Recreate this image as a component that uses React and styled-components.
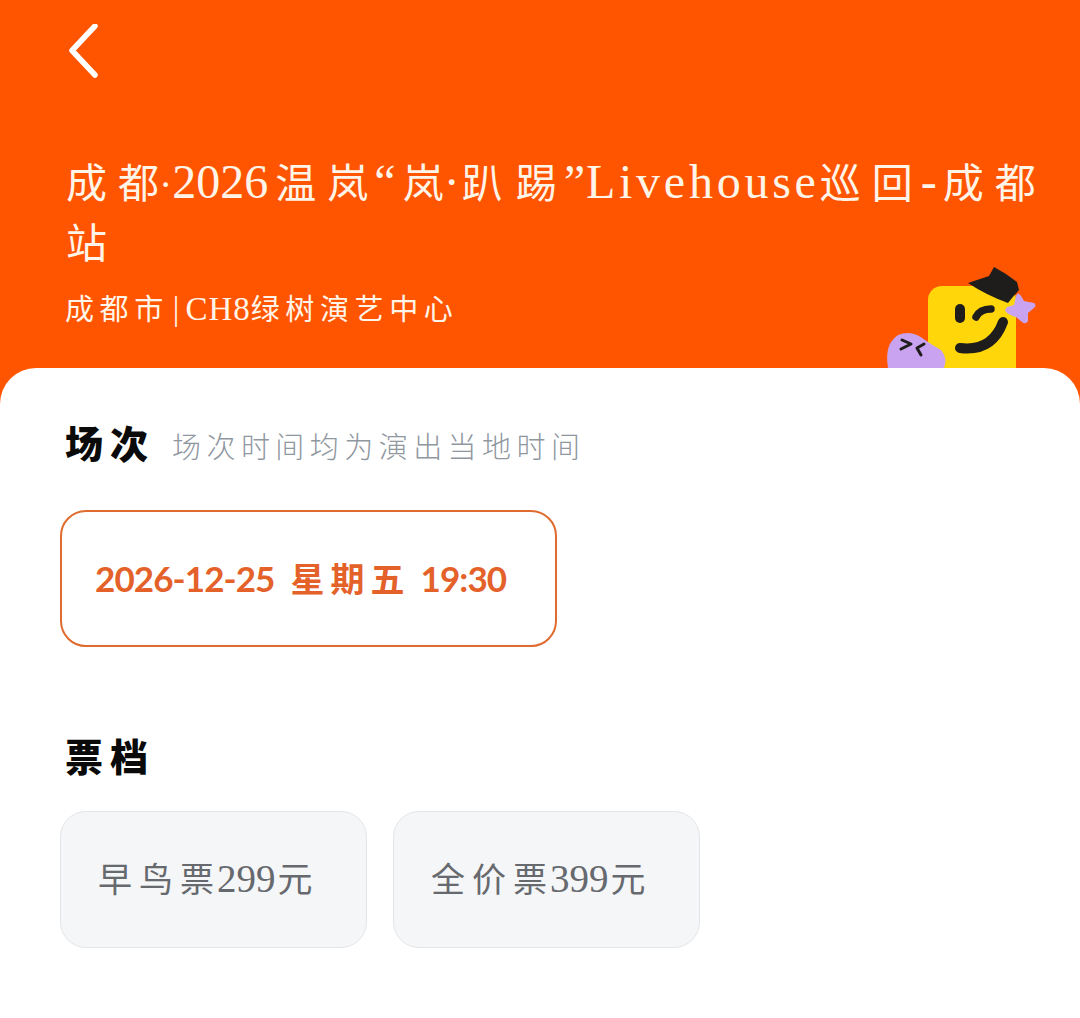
import React from 'react';
import styled, { createGlobalStyle } from 'styled-components';

const Global = createGlobalStyle`
  html, body {
    margin: 0;
    background: #fff;
  }
  * {
    box-sizing: border-box;
  }
`;

const SERIF = `"Liberation Serif", "Noto Sans CJK SC", serif`;
const CJK = `"Noto Sans CJK SC", sans-serif`;

const Page = styled.div`
  display: flex;
  flex-direction: column;
  width: 1080px;
  height: 1018px;
  overflow: hidden;
  background: #ff5500;
`;

const Header = styled.header`
  position: relative;
  height: 368px;
  flex: none;
  padding: 24px 0 0 66px;
  color: #fff4e8;
`;

const BackButton = styled.button`
  display: block;
  width: 36px;
  height: 54px;
  padding: 0;
  border: 0;
  background: none;
  color: #fff;
  svg {
    display: block;
  }
`;

const Title = styled.h1`
  margin: 75px 0 0;
  font-family: ${SERIF};
  font-size: 48px;
  font-weight: 400;
  line-height: 57px;
  white-space: nowrap;
`;

const HanRun = styled.span`
  font-family: ${CJK};
  font-size: ${(p) => p.$size}px;
  line-height: 1;
  letter-spacing: ${(p) => p.$gap}px;
`;

const HanTail = styled.span`
  letter-spacing: ${(p) => p.$end}px;
`;

// han text is set wider than the latin, but the last glyph should not carry that gap along
const Han = ({ children, size = 41, gap = 11, end = 0 }) => (
  <HanRun $size={size} $gap={gap}>
    {children.slice(0, -1)}
    <HanTail $end={end}>{children.slice(-1)}</HanTail>
  </HanRun>
);

const Run = styled.span`
  font-size: ${(p) => (p.$size ? `${p.$size}px` : 'inherit')};
  letter-spacing: ${(p) => p.$gap || 0}px;
  margin-left: ${(p) => p.$before || 0}px;
  margin-right: ${(p) => p.$after || 0}px;
`;

const Venue = styled.p`
  margin: 21px 0 0 -1px;
  font-family: ${SERIF};
  font-size: 33px;
  line-height: 36px;
  white-space: nowrap;
`;

const Mascot = styled.svg`
  position: absolute;
  right: 0;
  bottom: 0;
  display: block;
`;

const Sheet = styled.main`
  flex: 1;
  padding: 56px 60px 0;
  background: #fff;
  border-radius: 36px 36px 0 0;
`;

const SectionHead = styled.div`
  display: flex;
  align-items: center;
  gap: 17px;
  height: 42px;
  padding-left: 5px;
`;

const SectionTitle = styled.h2`
  margin: 0;
  padding-bottom: 6px;
  font-family: ${CJK};
  font-size: 38px;
  font-weight: 900;
  letter-spacing: 7px;
  line-height: 42px;
  color: #0a0a0a;
`;

const SectionNote = styled.span`
  font-family: ${CJK};
  font-size: 29px;
  font-weight: 300;
  letter-spacing: 5.45px;
  line-height: 42px;
  color: #8f979f;
`;

const SessionCard = styled.button`
  display: flex;
  align-items: center;
  width: 497px;
  height: 137px;
  margin-top: 44px;
  padding: 0 0 2px 33px;
  background: #fff;
  border: 2.5px solid #df6c2e;
  border-radius: 26px;
  font-family: "Lato", ${CJK};
  font-size: 35px;
  font-weight: 700;
  letter-spacing: -0.9px;
  color: #e4612a;
  white-space: nowrap;
`;

const Week = styled.span`
  margin: 0 10px 0 16px;
  font-family: ${CJK};
  font-size: 34px;
  font-weight: 700;
  letter-spacing: 6px;
`;

const TicketSection = styled.section`
  margin-top: 90px;
`;

const TicketRow = styled.div`
  display: grid;
  grid-template-columns: 307px 307px;
  gap: 26px;
  margin-top: 32px;
`;

const Ticket = styled.button`
  display: flex;
  align-items: center;
  height: 137px;
  padding: 0 0 3px 37px;
  background: #f5f6f8;
  border: 1.5px solid #e3e5e8;
  border-radius: 26px;
  font-family: ${SERIF};
  font-size: 39px;
  color: #66696d;
  white-space: nowrap;
`;

const MascotArt = () => (
  <Mascot width="220" height="118" viewBox="860 250 220 118" fill="none">
    <rect x="928" y="286" width="88" height="110" rx="14" fill="#ffd60a" />
    <path d="M968 283 L989 276 L994 267 L1006 274 L1017 282 L1019 290 L1012 298 L1008 303 Q986 295 968 283 Z" fill="#1f1c1c" />
    <path d="M1016 296 Q1018 291 1021 296 L1024 301 Q1029 302 1034 303 Q1037 305 1034 308 L1028 313 L1028 321 Q1026 325 1022 322 L1016 317 Q1009 315 1006 312 Q1004 310 1007 307 L1014 305 Z" fill="#c9a3f0" />
    <rect x="955" y="304" width="10" height="19" rx="5" fill="#1f1c1c" />
    <path d="M976 317 Q980 309 991 309" stroke="#1f1c1c" strokeWidth="7.5" strokeLinecap="round" />
    <path d="M960 348 Q992 352 1003 322" stroke="#1f1c1c" strokeWidth="10" strokeLinecap="round" />
    <path d="M888 368 Q884 344 898 335 Q912 329 925 340 Q932 345 941 350 Q948 358 944 368 Z" fill="#c9a3f0" />
    <path d="M902 340 L911 344 L901 349" stroke="#1f1c1c" strokeWidth="3" strokeLinecap="round" strokeLinejoin="round" />
    <path d="M924 344 L917 348 L921 355" stroke="#1f1c1c" strokeWidth="3" strokeLinecap="round" strokeLinejoin="round" />
  </Mascot>
);

const App = () => (
  <Page>
    <Global />
    <Header>
      <BackButton aria-label="返回">
        <svg width="36" height="54" viewBox="0 0 36 54" fill="none">
          <path d="M29 2 L6 26.5 L29 51" stroke="currentColor" strokeWidth="5.5" strokeLinecap="round" strokeLinejoin="round" />
        </svg>
      </BackButton>
      <Title>
        <Han>成都</Han>
        <Run $size={40}>·</Run>
        <Run $after={7}>2026</Run>
        <Han>温岚</Han>
        <Run $before={6} $after={7}>“</Run>
        <Han>岚</Han>
        <Run $after={2}>·</Run>
        <Han gap={13}>趴踢</Han>
        <Run $before={7} $after={1}>”</Run>
        <Run $gap={3.75}>Livehouse</Run>
        <Han>巡回</Han>
        <Run $before={8} $after={6}>-</Run>
        <Han>成都</Han>
        <br />
        <Han>站</Han>
      </Title>
      <Venue>
        <Han size={29} gap={5.6} end={5.6}>成都市</Han>
        <Run $before={4} $after={6}>|</Run>
        <Run $gap={1}>CH8</Run>
        <Han size={29} gap={5.6}>绿树演艺中心</Han>
      </Venue>
      <MascotArt />
    </Header>
    <Sheet>
      <section>
        <SectionHead>
          <SectionTitle>场次</SectionTitle>
          <SectionNote>场次时间均为演出当地时间</SectionNote>
        </SectionHead>
        <SessionCard>
          2026-12-25<Week>星期五</Week>19:30
        </SessionCard>
      </section>
      <TicketSection>
        <SectionHead>
          <SectionTitle>票档</SectionTitle>
        </SectionHead>
        <TicketRow>
          <Ticket>
            <Han size={34} gap={7} end={3}>早鸟票</Han>299<Run $before={2}><Han size={35} gap={0}>元</Han></Run>
          </Ticket>
          <Ticket>
            <Han size={34} gap={7} end={3}>全价票</Han>399<Run $before={2}><Han size={35} gap={0}>元</Han></Run>
          </Ticket>
        </TicketRow>
      </TicketSection>
    </Sheet>
  </Page>
);

export default App;
